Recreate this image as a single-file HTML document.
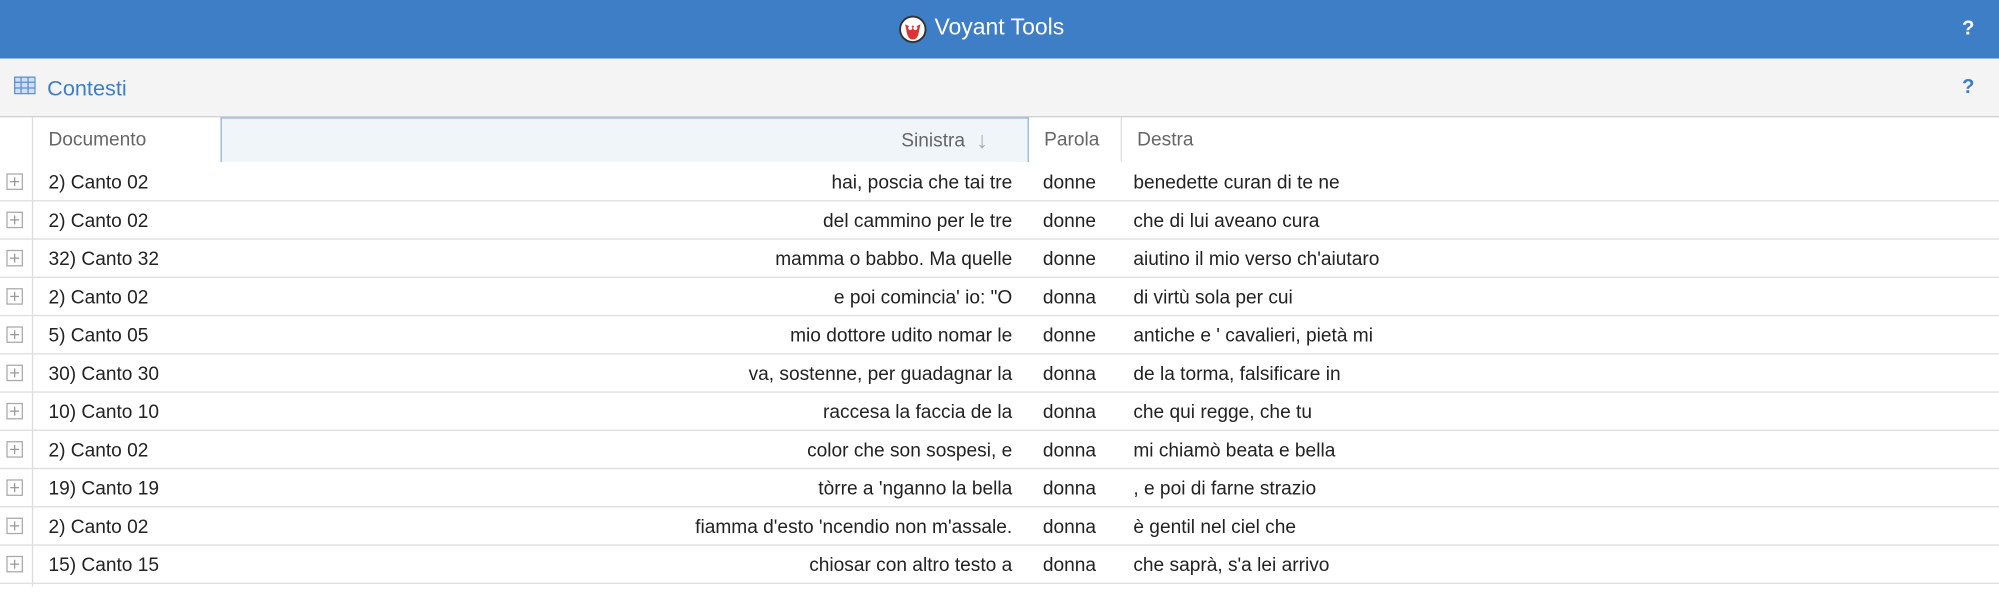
<!DOCTYPE html>
<html><head><meta charset="utf-8"><style>
html,body{margin:0;padding:0;width:1999px;height:609px;overflow:hidden;background:#fff}
#w{width:1568px;height:478px;transform:scale(1.27487);transform-origin:0 0;position:relative;font-family:"Liberation Sans",sans-serif}
.hd{position:absolute;left:0;top:0;width:1568px;height:46px;background:#3e7ec6;color:#fff}
.hd .t{position:absolute;left:733px;top:11px;font-size:18px}
.q{position:absolute;font-weight:bold;font-size:16px}
.tb{position:absolute;left:0;top:46px;width:1568px;height:45px;background:#f4f4f4;border-bottom:1px solid #d0d0d0}
.tb .t{position:absolute;left:37px;top:14px;font-size:17px;color:#3e7ec6}
.gh{position:absolute;top:92px;height:35px;font-size:15px;color:#666;line-height:35px;box-sizing:border-box}
.row{position:absolute;left:0;width:1568px;height:30px;border-bottom:1px solid #ddd;font-size:15px;color:#222;line-height:30px}
.row span{position:absolute;top:2px}
.ex{position:absolute;left:5px;top:9px;width:11px;height:11px;border:1px solid #aaa}
.ex:before{content:"";position:absolute;left:2px;top:5px;width:7px;height:1px;background:#999}
.ex:after{content:"";position:absolute;left:5px;top:2px;width:1px;height:7px;background:#999}
</style></head><body><div id="w">
<div class="hd">
<svg style="position:absolute;left:705px;top:12px" width="22" height="22" viewBox="0 0 22 22"><circle cx="11" cy="11" r="10" fill="#fff"/><circle cx="11" cy="11" r="10" fill="none" stroke="#333" stroke-width="1.5"/><path d="M5 7 L9 9 L11 8 L13 9 L17 7 L16 12 Q15 19 11 19 Q7 19 6 12Z" fill="#d33"/><circle cx="9" cy="10" r="1.6" fill="#fff"/><circle cx="13" cy="10" r="1.6" fill="#fff"/></svg>
<div class="t">Voyant Tools</div><div class="q" style="left:1539px;top:14px">?</div></div>
<div class="tb">
<svg style="position:absolute;left:11px;top:14px" width="17" height="14" viewBox="0 0 17 14"><rect x="0.5" y="0.5" width="16" height="13" fill="#cfe0f3" stroke="#5b8fd0"/><path d="M0 4.5H17M0 9H17M5.5 0V14M11 0V14" stroke="#5b8fd0"/></svg>
<div class="t">Contesti</div><div class="q" style="left:1539px;top:14px;color:#3e7ec6">?</div></div>
<div class="gh" style="left:0;width:26px;border-right:1px solid #ddd;height:368px"></div>
<div class="gh" style="left:26px;width:147px;padding-left:12px">Documento</div>
<div class="gh" style="left:173px;width:634px;background:#f0f5fa;border:1px solid #8fb3dc;border-bottom:none;text-align:right;padding-right:49px">Sinistra<span style="position:absolute;right:31px;top:0;color:#aaa;font-size:18px">↓</span></div>
<div class="gh" style="left:807px;width:73px;border-right:1px solid #ddd;padding-left:12px">Parola</div>
<div class="gh" style="left:880px;width:600px;padding-left:12px">Destra</div>
<div class="row" style="top:127px"><i class="ex"></i><span style="left:38px">2) Canto 02</span><span style="right:774px">hai, poscia che tai tre</span><span style="left:818px">donne</span><span style="left:889px">benedette curan di te ne</span></div>
<div class="row" style="top:157px"><i class="ex"></i><span style="left:38px">2) Canto 02</span><span style="right:774px">del cammino per le tre</span><span style="left:818px">donne</span><span style="left:889px">che di lui aveano cura</span></div>
<div class="row" style="top:187px"><i class="ex"></i><span style="left:38px">32) Canto 32</span><span style="right:774px">mamma o babbo. Ma quelle</span><span style="left:818px">donne</span><span style="left:889px">aiutino il mio verso ch'aiutaro</span></div>
<div class="row" style="top:217px"><i class="ex"></i><span style="left:38px">2) Canto 02</span><span style="right:774px">e poi comincia' io: "O</span><span style="left:818px">donna</span><span style="left:889px">di virtù sola per cui</span></div>
<div class="row" style="top:247px"><i class="ex"></i><span style="left:38px">5) Canto 05</span><span style="right:774px">mio dottore udito nomar le</span><span style="left:818px">donne</span><span style="left:889px">antiche e ' cavalieri, pietà mi</span></div>
<div class="row" style="top:277px"><i class="ex"></i><span style="left:38px">30) Canto 30</span><span style="right:774px">va, sostenne, per guadagnar la</span><span style="left:818px">donna</span><span style="left:889px">de la torma, falsificare in</span></div>
<div class="row" style="top:307px"><i class="ex"></i><span style="left:38px">10) Canto 10</span><span style="right:774px">raccesa la faccia de la</span><span style="left:818px">donna</span><span style="left:889px">che qui regge, che tu</span></div>
<div class="row" style="top:337px"><i class="ex"></i><span style="left:38px">2) Canto 02</span><span style="right:774px">color che son sospesi, e</span><span style="left:818px">donna</span><span style="left:889px">mi chiamò beata e bella</span></div>
<div class="row" style="top:367px"><i class="ex"></i><span style="left:38px">19) Canto 19</span><span style="right:774px">tòrre a 'nganno la bella</span><span style="left:818px">donna</span><span style="left:889px">, e poi di farne strazio</span></div>
<div class="row" style="top:397px"><i class="ex"></i><span style="left:38px">2) Canto 02</span><span style="right:774px">fiamma d'esto 'ncendio non m'assale.</span><span style="left:818px">donna</span><span style="left:889px">è gentil nel ciel che</span></div>
<div class="row" style="top:427px"><i class="ex"></i><span style="left:38px">15) Canto 15</span><span style="right:774px">chiosar con altro testo a</span><span style="left:818px">donna</span><span style="left:889px">che saprà, s'a lei arrivo</span></div>
</div>
</body></html>
